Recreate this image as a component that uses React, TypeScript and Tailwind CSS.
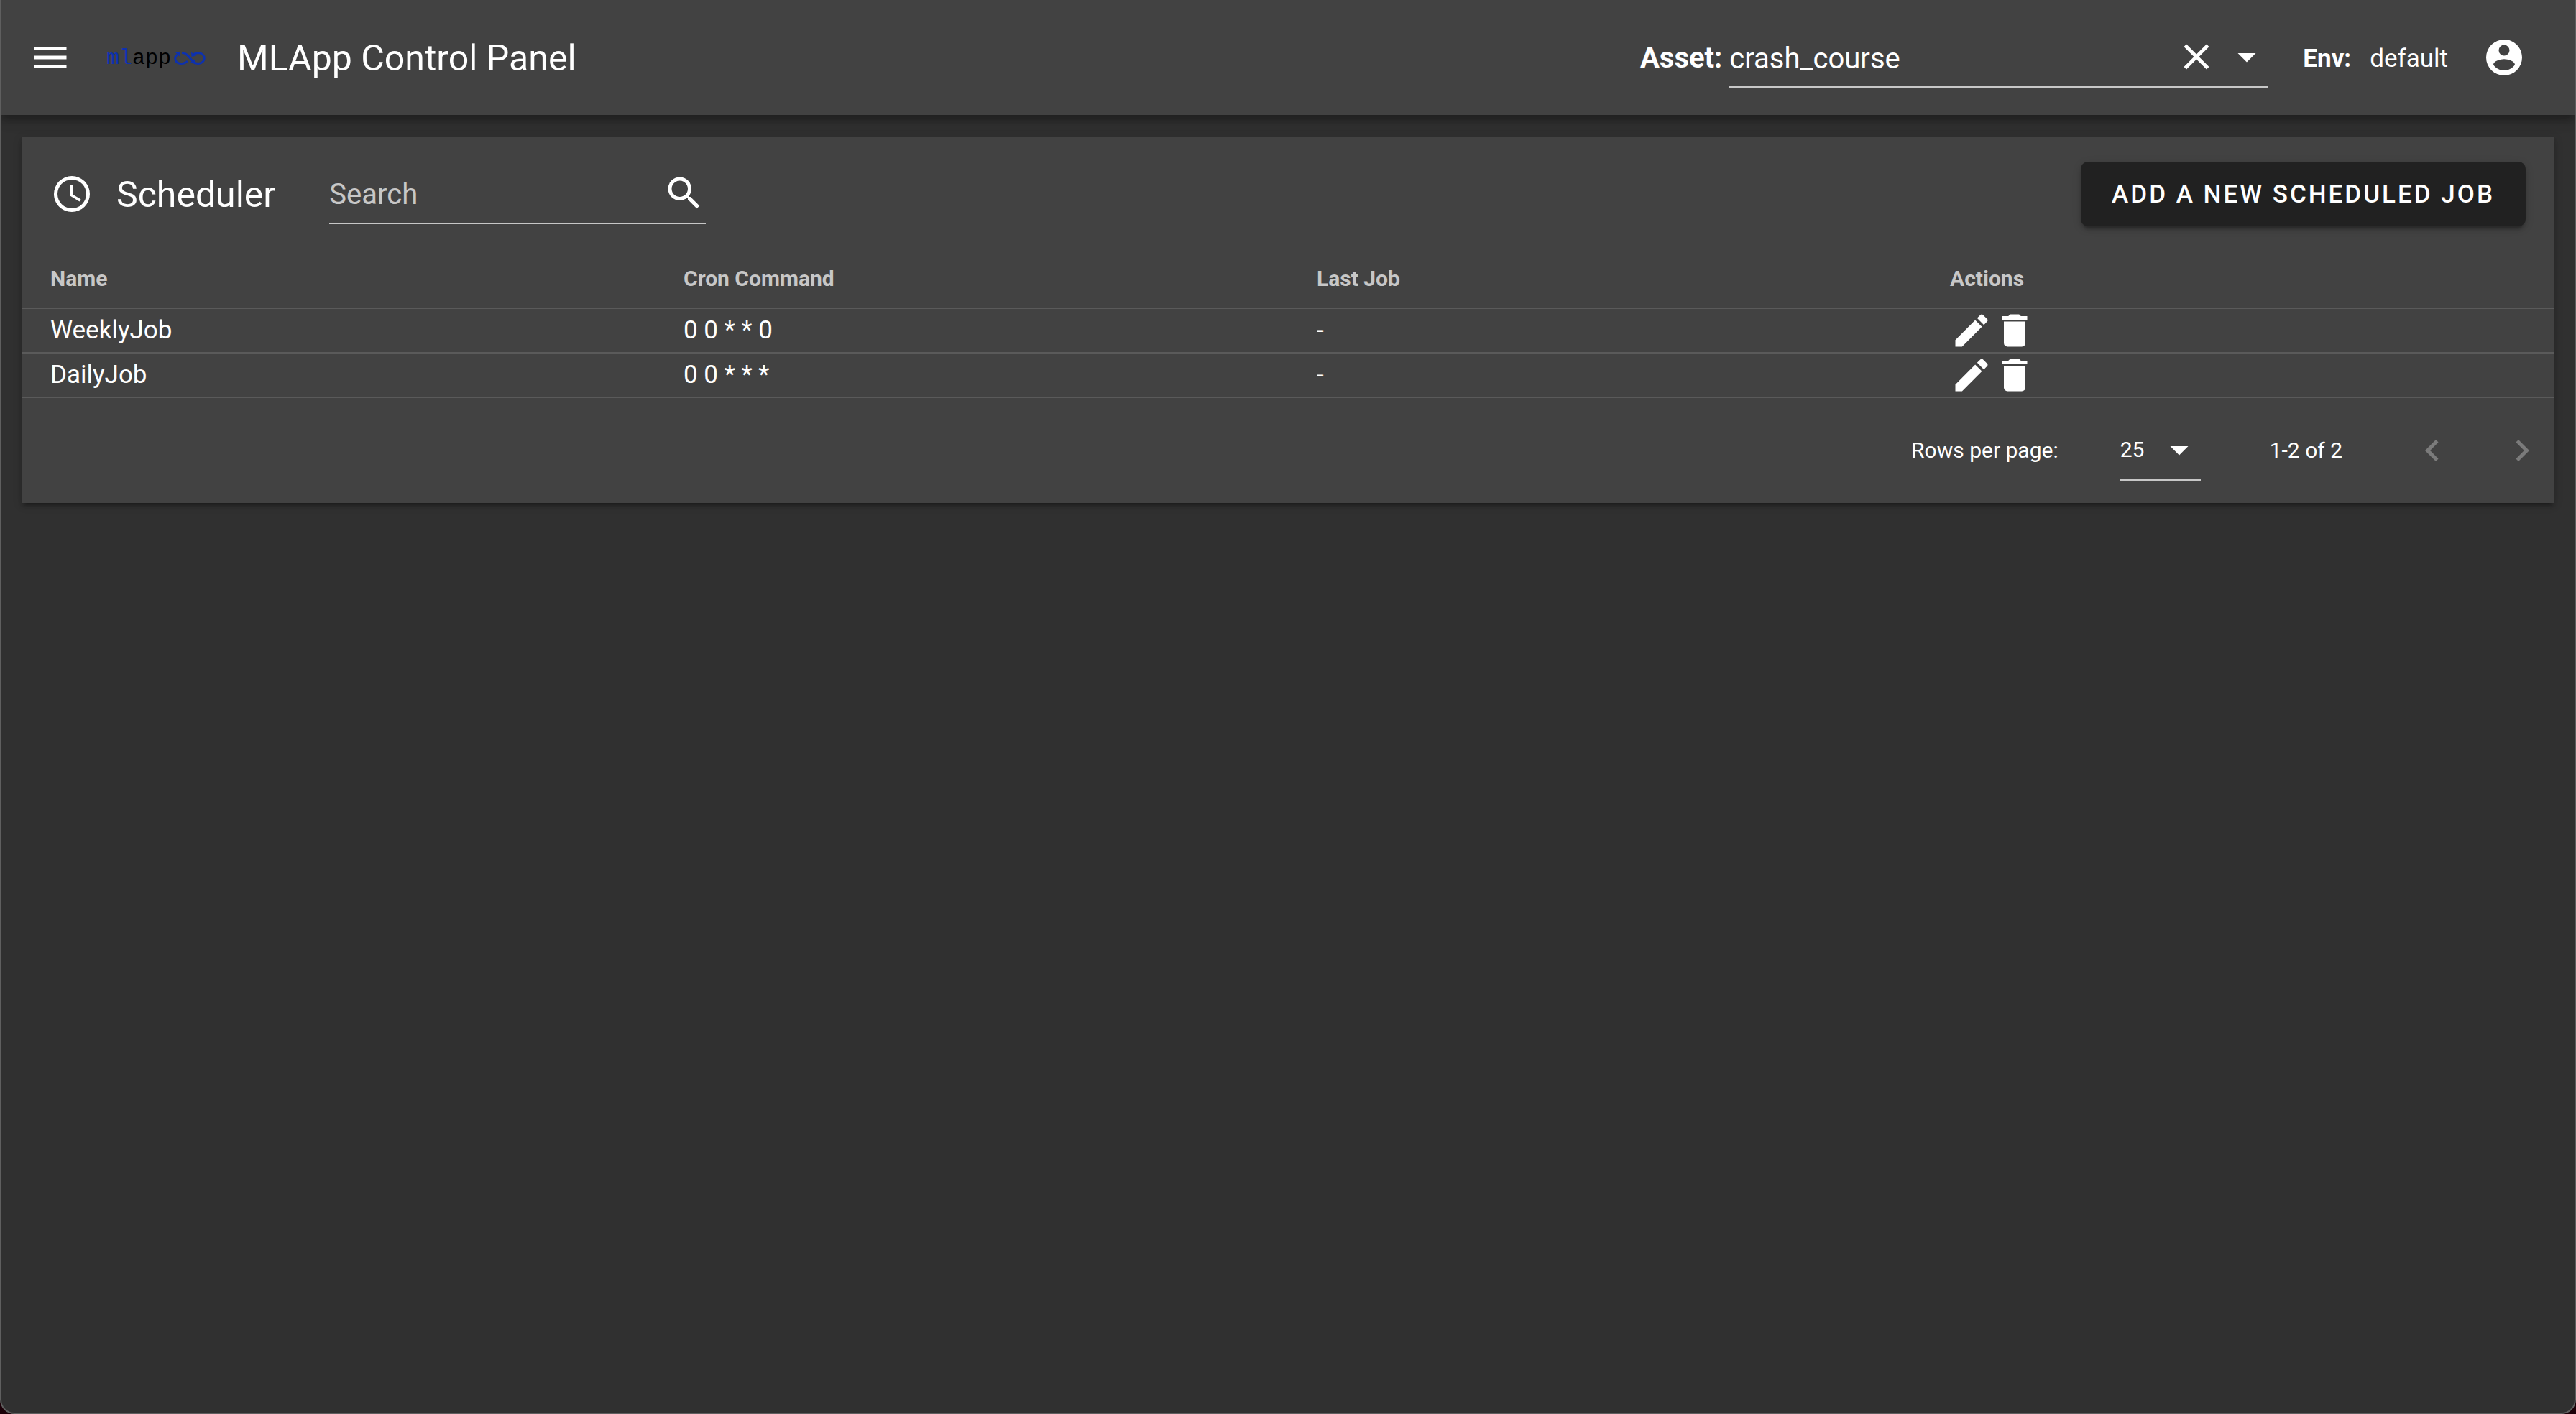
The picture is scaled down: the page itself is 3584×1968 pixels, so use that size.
import { useState } from "react";

const icons = {
  menu: "M3,6H21V8H3V6M3,11H21V13H3V11M3,16H21V18H3V16Z",
  close:
    "M19,6.41L17.59,5L12,10.59L6.41,5L5,6.41L10.59,12L5,17.59L6.41,19L12,13.41L17.59,19L19,17.59L13.41,12L19,6.41Z",
  arrowDown: "M7,10L12,15L17,10H7Z",
  account:
    "M12,19.2C9.5,19.2 7.29,17.92 6,16C6.03,14 10,12.9 12,12.9C14,12.9 17.97,14 18,16C16.71,17.92 14.5,19.2 12,19.2M12,5A3,3 0 0,1 15,8A3,3 0 0,1 12,11A3,3 0 0,1 9,8A3,3 0 0,1 12,5M12,2A10,10 0 0,0 2,12A10,10 0 0,0 12,22A10,10 0 0,0 22,12C22,6.47 17.5,2 12,2Z",
  clock:
    "M12,20A8,8 0 0,0 20,12A8,8 0 0,0 12,4A8,8 0 0,0 4,12A8,8 0 0,0 12,20M12,2A10,10 0 0,1 22,12A10,10 0 0,1 12,22C6.47,22 2,17.5 2,12A10,10 0 0,1 12,2M12.5,7V12.25L17,14.92L16.25,16.15L11,13V7H12.5Z",
  magnify:
    "M9.5,3A6.5,6.5 0 0,1 16,9.5C16,11.11 15.41,12.59 14.44,13.73L14.71,14H15.5L20.5,19L19,20.5L14,15.5V14.71L13.73,14.44C12.59,15.41 11.11,16 9.5,16A6.5,6.5 0 0,1 3,9.5A6.5,6.5 0 0,1 9.5,3M9.5,5C7,5 5,7 5,9.5C5,12 7,14 9.5,14C12,14 14,12 14,9.5C14,7 12,5 9.5,5Z",
  pencil:
    "M20.71,7.04C21.1,6.65 21.1,6 20.71,5.63L18.37,3.29C18,2.9 17.35,2.9 16.96,3.29L15.12,5.12L18.87,8.87M3,17.25V21H6.75L17.81,9.93L14.06,6.18L3,17.25Z",
  trash:
    "M19,4H15.5L14.5,3H9.5L8.5,4H5V6H19M6,19A2,2 0 0,0 8,21H16A2,2 0 0,0 18,19V7H6V19Z",
  left: "M15.41,16.58L10.83,12L15.41,7.41L14,6L8,12L14,18L15.41,16.58Z",
  right: "M8.59,16.58L13.17,12L8.59,7.41L10,6L16,12L10,18L8.59,16.58Z",
};

function Icon({ name, className = "" }: { name: keyof typeof icons; className?: string }) {
  return (
    <svg viewBox="0 0 24 24" aria-hidden="true" className={"size-[60px] shrink-0 fill-current " + className}>
      <path d={icons[name]} />
    </svg>
  );
}

function Logo() {
  return (
    <div className="flex items-center pt-[2px]" role="img" aria-label="mlapp">
      <span className="font-['Liberation_Mono',monospace] text-[30px] leading-[40px] text-black">
        <span className="text-[#0d31b0]">ml</span>app
      </span>
      <svg viewBox="0 0 44 18" className="ml-[4px] h-[18px] w-[44px]" fill="none" stroke="#0d31b0" strokeWidth="3">
        <path d="M5 4C-1 8 2 16.500 10 16.500C14 16.500 17 15 19 13" />
        <path d="M11 1.500C18 1.500 21 8 27 14" />
        <path d="M27 4.500C29 2.500 31 1.500 33.500 1.500C45 2 45 16 34 16.500C32 16.500 30.500 16 29 15.500" />
        <path d="M2 1L9 0.500L8 6.500ZM23 15L29 10.500L30 17.500ZM24 0.500L24.500 7L31 5.500Z" fill="#0d31b0" stroke="none" />
      </svg>
    </div>
  );
}

const jobs = [
  { name: "WeeklyJob", cron: "0 0 * * 0", last: "-" },
  { name: "DailyJob", cron: "0 0 * * *", last: "-" },
];

export default function App() {
  const [asset, setAsset] = useState("crash_course");
  const [query, setQuery] = useState("");

  return (
    <div className="min-h-screen bg-[#1c0008] font-[Roboto,sans-serif] text-white">
      <div className="relative flex min-h-screen flex-col overflow-hidden rounded-b-[20px] bg-[#303030]">
        <header className="relative flex h-[160px] items-center bg-[#424242] pr-[70px] pl-[40px] shadow-[0_5px_10px_-2px_rgba(0,0,0,0.2),0_10px_12px_0_rgba(0,0,0,0.14),0_2px_25px_0_rgba(0,0,0,0.12)]">
          <button type="button" aria-label="Menu">
            <Icon name="menu" />
          </button>
          <div className="ml-[48px]">
            <Logo />
          </div>
          <h1 className="ml-[44px] pt-[2px] text-[50px] leading-[60px]">MLApp Control Panel</h1>
          <div className="ml-auto flex items-center">
            <label htmlFor="asset" className="mr-[10px] pt-[2px] text-[40px] leading-[60px] font-bold">
              Asset:
            </label>
            <div className="flex h-[84px] w-[750px] items-center border-b-2 border-[#c7c7c7]">
              <input
                id="asset"
                value={asset}
                onChange={(e) => setAsset(e.target.value)}
                className="h-[60px] min-w-0 flex-1 bg-transparent pt-[4px] text-[40px] leading-[56px] outline-none"
              />
              <button type="button" aria-label="Clear asset" onClick={() => setAsset("")}>
                <Icon name="close" />
              </button>
              <button type="button" aria-label="Show assets" className="ml-[10px]">
                <Icon name="arrowDown" />
              </button>
            </div>
            <p className="ml-[48px] pt-[4px] text-[35px] leading-[60px]">
              <b className="mr-[26px]">Env:</b>default
            </p>
            <button type="button" aria-label="Account" className="ml-[48px]">
              <Icon name="account" />
            </button>
          </div>
        </header>

        <main className="p-[30px]">
          <section className="bg-[#424242] shadow-[0_8px_3px_-5px_rgba(0,0,0,0.2),0_5px_5px_0_rgba(0,0,0,0.14),0_3px_13px_0_rgba(0,0,0,0.12)]">
            <div className="flex h-[160px] items-center px-[40px]">
              <Icon name="clock" />
              <h2 className="ml-[32px] pt-[2px] text-[50px] leading-[60px]">Scheduler</h2>
              <div className="ml-[75px] flex h-[84px] w-[524px] items-center border-b-2 border-[#c7c7c7]">
                <input
                  type="text"
                  aria-label="Search"
                  placeholder="Search"
                  value={query}
                  onChange={(e) => setQuery(e.target.value)}
                  className="h-[60px] min-w-0 flex-1 bg-transparent pt-[2px] text-[40px] leading-[56px] outline-none placeholder:text-[#c7c7c7]"
                />
                <Icon name="magnify" />
              </div>
              <button
                type="button"
                className="ml-auto h-[90px] rounded-[10px] bg-[#212121] px-[43px] pt-[2px] text-[35px] font-medium tracking-[3px] uppercase shadow-[0_8px_3px_-5px_rgba(0,0,0,0.2),0_5px_5px_0_rgba(0,0,0,0.14),0_3px_13px_0_rgba(0,0,0,0.12)]"
              >
                Add a new scheduled job
              </button>
            </div>

            <table className="w-full table-fixed border-collapse text-left">
              <thead>
                <tr className="h-[79px] border-b-2 border-[#5a5a5a] text-[30px] text-[#c7c7c7]">
                  <th className="px-[40px] pt-0 pb-[4px] font-bold">Name</th>
                  <th className="px-[40px] pt-0 pb-[4px] font-bold">Cron Command</th>
                  <th className="px-[40px] pt-0 pb-[4px] font-bold">Last Job</th>
                  <th className="px-[40px] pt-0 pb-[4px] font-bold">Actions</th>
                </tr>
              </thead>
              <tbody>
                {jobs.map((job) => (
                  <tr key={job.name} className="h-[62px] border-b-2 border-[#5a5a5a] text-[35px] leading-[60px]">
                    <td className="px-[40px] py-0">{job.name}</td>
                    <td className="px-[40px] py-0">{job.cron}</td>
                    <td className="px-[40px] py-0">{job.last}</td>
                    <td className="px-[40px] py-0">
                      <div className="flex">
                        <button type="button" aria-label={"Edit " + job.name}>
                          <Icon name="pencil" />
                        </button>
                        <button type="button" aria-label={"Delete " + job.name}>
                          <Icon name="trash" />
                        </button>
                      </div>
                    </td>
                  </tr>
                ))}
              </tbody>
            </table>

            <div className="flex h-[146px] items-center justify-end pr-[15px] text-[30px] leading-[60px]">
              <label htmlFor="rows">Rows per page:</label>
              <div className="relative ml-[86px] flex h-[84px] w-[112px] items-center border-b-2 border-[#c7c7c7]">
                <select id="rows" defaultValue="25" className="h-[60px] w-full appearance-none bg-transparent text-[30px] outline-none">
                  <option>10</option>
                  <option>25</option>
                  <option>50</option>
                </select>
                <Icon name="arrowDown" className="pointer-events-none absolute right-0" />
              </div>
              <p className="ml-[96px]">1-2 of 2</p>
              <button type="button" aria-label="Previous page" disabled className="ml-[95px] text-[#7b7b7b]">
                <Icon name="left" />
              </button>
              <button type="button" aria-label="Next page" disabled className="ml-[65px] text-[#7b7b7b]">
                <Icon name="right" />
              </button>
            </div>
          </section>
        </main>
        <div className="pointer-events-none absolute inset-0 rounded-b-[20px] border-2 border-t-0 border-[#5f5f5f]" />
      </div>
    </div>
  );
}
